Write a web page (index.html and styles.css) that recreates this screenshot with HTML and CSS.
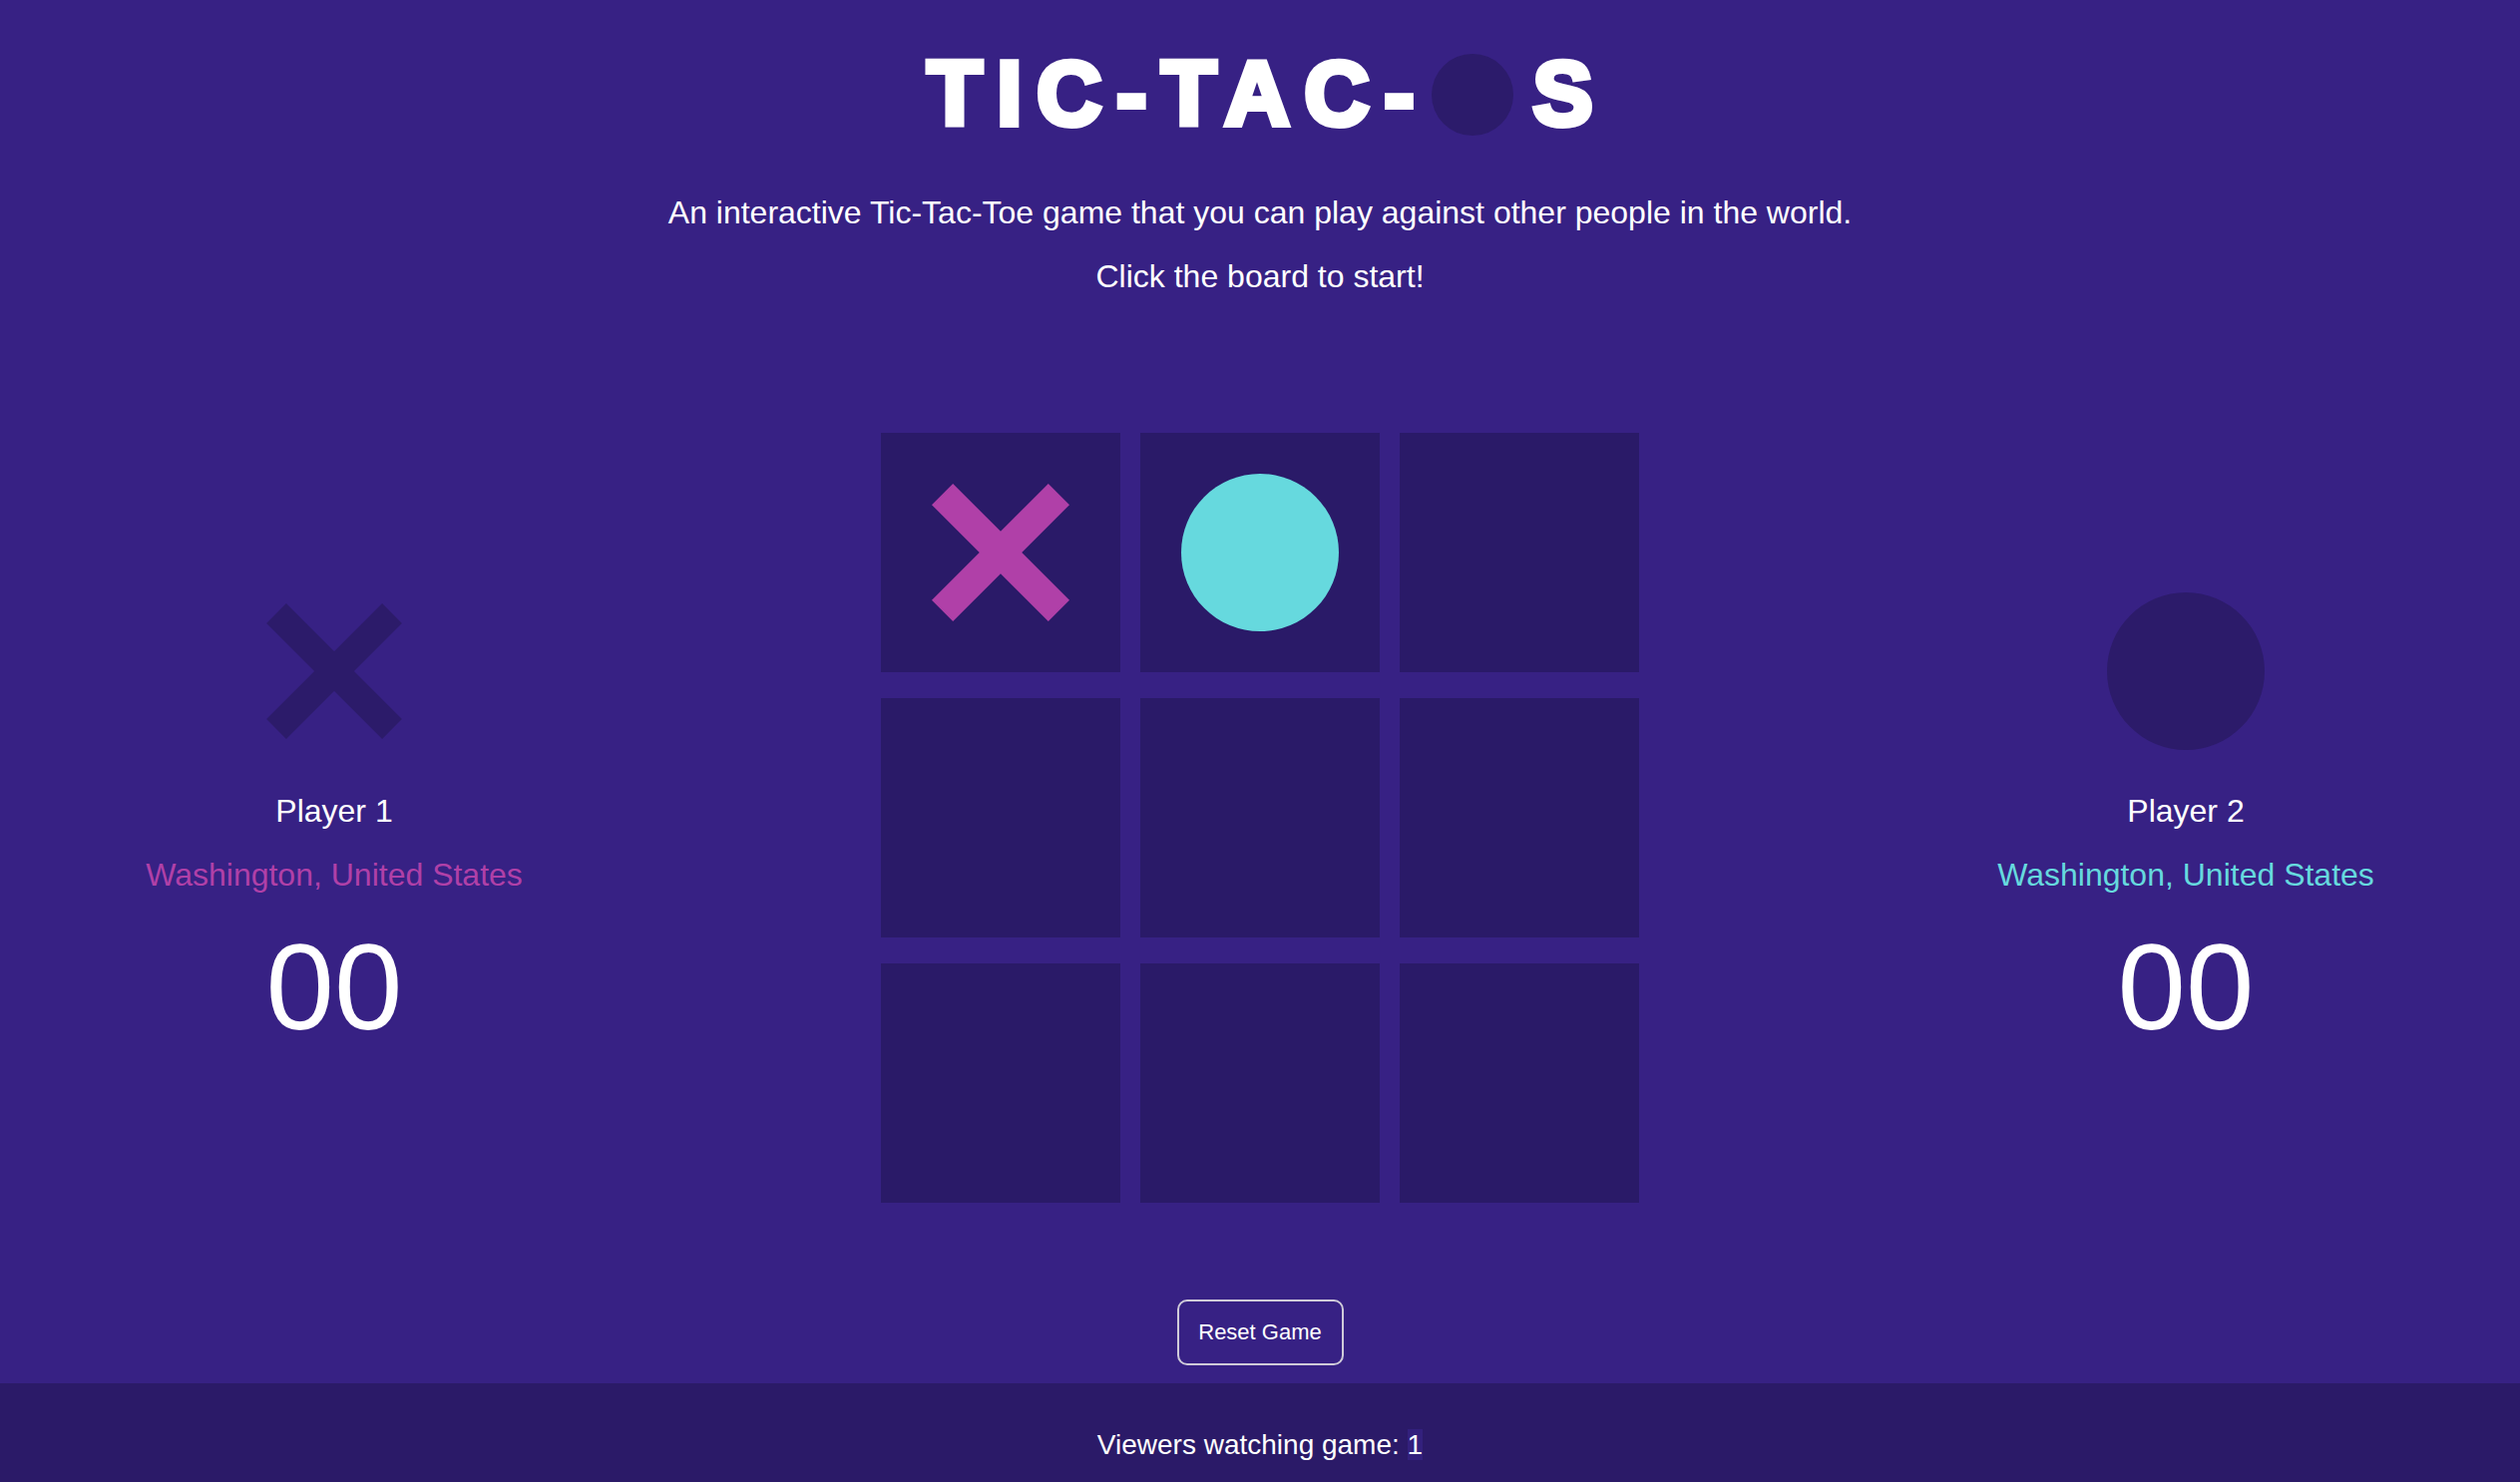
FILE: index.html
```html
<!DOCTYPE html>
<html lang="en">
<head>
<meta charset="utf-8">
<title>Tic-Tac-Os</title>
<link rel="stylesheet" href="styles.css">
</head>
<body>
<header class="header">
  <h1 class="title">TIC-TAC-<span class="title-o"></span>S</h1>
  <p class="intro intro-first">An interactive Tic-Tac-Toe game that you can play against other people in the world.</p>
  <p class="intro">Click the board to start!</p>
</header>
<main class="game">
  <section class="player">
    <div class="player-icon">
      <svg class="player-x" width="136" height="136" viewBox="0 0 136 136"><path d="M10 10 L126 126 M126 10 L10 126" stroke="#2c1b6a" stroke-width="28" fill="none"/></svg>
    </div>
    <div class="player-name">Player 1</div>
    <div class="player-loc loc-x">Washington, United States</div>
    <div class="player-score">00</div>
  </section>
  <div class="board">
    <div class="cell"><svg width="138" height="138" viewBox="0 0 138 138"><path d="M10.6 10.6 L127.4 127.4 M127.4 10.6 L10.6 127.4" stroke="#b040a8" stroke-width="30" fill="none"/></svg></div>
    <div class="cell"><span class="mark-o"></span></div>
    <div class="cell"></div>
    <div class="cell"></div>
    <div class="cell"></div>
    <div class="cell"></div>
    <div class="cell"></div>
    <div class="cell"></div>
    <div class="cell"></div>
  </div>
  <section class="player">
    <div class="player-icon">
      <span class="player-o"></span>
    </div>
    <div class="player-name">Player 2</div>
    <div class="player-loc loc-o">Washington, United States</div>
    <div class="player-score">00</div>
  </section>
</main>
<div class="actions">
  <button class="reset" type="button">Reset Game</button>
</div>
<footer class="footer">Viewers watching game: <span class="viewers">1</span></footer>
</body>
</html>
```
FILE: styles.css
```css
html, body {
  margin: 0;
  padding: 0;
}
body {
  background: #372184;
  color: #ffffff;
  font-family: "Liberation Sans", Arial, sans-serif;
  width: 2526px;
  min-height: 1486px;
  display: flex;
  flex-direction: column;
}
.header {
  padding-top: 38px;
  text-align: center;
}
.title {
  margin: 0 0 44px 0;
  padding-left: 15px;
  font-size: 90px;
  line-height: 113px;
  font-weight: 700;
  letter-spacing: 15px;
  -webkit-text-stroke: 6px #ffffff;
  color: #ffffff;
}
.title-o {
  display: inline-block;
  width: 82px;
  height: 82px;
  border-radius: 50%;
  background: #2c1b6b;
  vertical-align: -11px;
  margin: 0 20px 0 2px;
}
.intro {
  margin: 0;
  font-size: 32px;
  line-height: 37px;
}
.intro-first {
  margin-bottom: 27px;
}
.game {
  margin-top: 138px;
  display: grid;
  grid-template-columns: 670px 1fr 670px;
  align-items: center;
}
.player {
  text-align: center;
  display: flex;
  flex-direction: column;
  align-items: center;
}
.player-icon {
  height: 160px;
  display: flex;
  align-items: center;
  justify-content: center;
}
.player-x {
  display: block;
}
.player-o {
  display: block;
  width: 158px;
  height: 158px;
  border-radius: 50%;
  background: #2c1b6a;
}
.player-name {
  margin-top: 42px;
  font-size: 32px;
  line-height: 37px;
}
.player-loc {
  margin-top: 27px;
  font-size: 32px;
  line-height: 37px;
}
.loc-x { color: #b040a8; }
.loc-o { color: #66d9de; }
.player-score {
  margin-top: 36px;
  font-size: 123px;
  line-height: 116px;
}
.board {
  justify-self: center;
  display: grid;
  grid-template-columns: repeat(3, 240px);
  grid-template-rows: repeat(3, 240px);
  column-gap: 20px;
  row-gap: 26px;
}
.cell {
  background: #2a1a68;
  display: flex;
  align-items: center;
  justify-content: center;
}
.cell svg { display: block; }
.mark-o {
  display: block;
  width: 158px;
  height: 158px;
  border-radius: 50%;
  background: #66d9de;
}
.actions {
  margin-top: 97px;
  display: flex;
  justify-content: center;
}
.reset {
  box-sizing: border-box;
  height: 66px;
  width: 167px;
  padding: 0;
  border: 2px solid #cfcbd9;
  border-radius: 10px;
  background: transparent;
  color: #ffffff;
  font-family: "Liberation Sans", Arial, sans-serif;
  font-size: 22px;
  line-height: 26px;
}
.footer {
  margin-top: 18px;
  height: 100px;
  box-sizing: border-box;
  padding-top: 46px;
  background: #2b1a68;
  text-align: center;
  font-size: 28px;
  line-height: 32px;
}
.viewers {
  background: #33207d;
}
```
